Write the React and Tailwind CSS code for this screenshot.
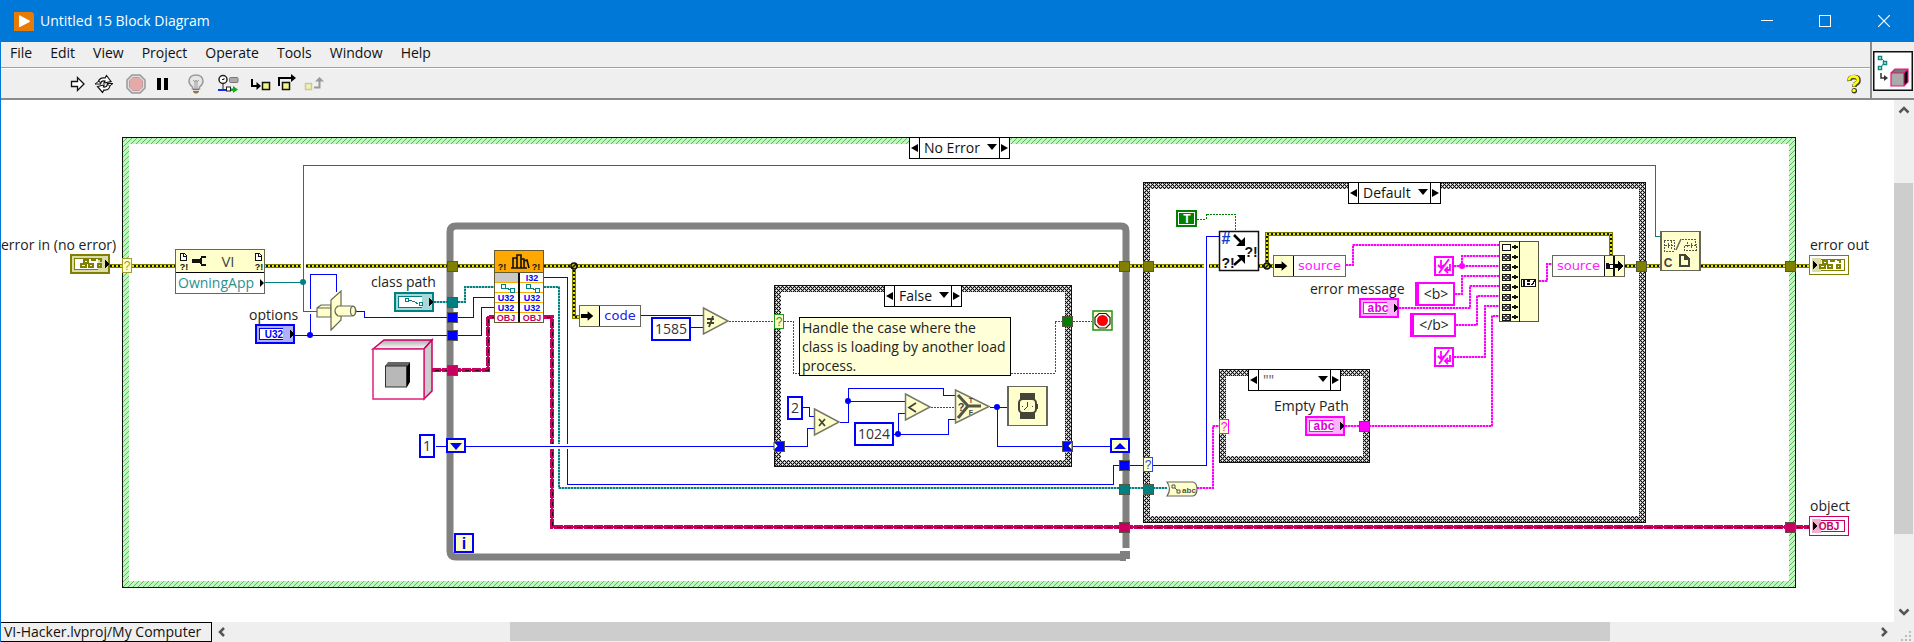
import React from "react";

const ORIGIN = { x: 1, y: 100 };
const UI = "font-['Open_Sans','Noto_Sans',sans-serif]";
const BLUE = "#0000ff";
const TEAL = "#008080";
const PINK = "#ff00ff";
const OBJ = "#c8005f";
const GREEN = "#008000";
const CREAM = "#ffffcc";

/* ---------- window chrome ---------- */

function TitleBar() {
  return (
    <header className="flex h-[42px] shrink-0 items-center bg-[#0078d7] text-white">
      <svg className="ml-[13px] size-5" viewBox="0 0 20 20" aria-hidden="true">
        <path d="M0 1H17Q20 1 20 4V20H0Z" fill="#e87a08" />
        <path d="M5 4.5Q5 4 6 4.5L15.5 9.5Q16.5 10.2 15.5 11L6 16Q5 16.400 5 15.500Z" fill="#fff" />
      </svg>
      <h1 className="ml-1.5 flex-1 text-sm leading-5">Untitled 15 Block Diagram</h1>
      <button type="button" aria-label="Minimize" className="flex h-full w-[58px] items-center justify-center">
        <svg className="h-3 w-3" viewBox="0 0 12 12" shapeRendering="crispEdges"><path d="M0 5.500H12" stroke="#fff" /></svg>
      </button>
      <button type="button" aria-label="Maximize" className="flex h-full w-[58px] items-center justify-center">
        <svg className="h-3 w-3" viewBox="0 0 12 12" shapeRendering="crispEdges"><rect x=".5" y=".5" width="11" height="11" fill="none" stroke="#fff" /></svg>
      </button>
      <button type="button" aria-label="Close" className="flex h-full w-[60px] items-center justify-center">
        <svg className="h-3 w-3" viewBox="0 0 12 12"><path d="M0 0L12 12M12 0L0 12" stroke="#fff" strokeWidth="1.200" /></svg>
      </button>
    </header>
  );
}

function MenuBar() {
  return (
    <nav className="flex h-[26px] items-center gap-[18px] border-b border-[#a0a0a0] pb-1 pl-[9px] text-sm leading-5 text-[#111]">
      {["File", "Edit", "View", "Project", "Operate", "Tools", "Window", "Help"].map((m) => (
        <button key={m} type="button">{m}</button>
      ))}
    </nav>
  );
}

function Tool({ label, className, children }) {
  return (
    <button type="button" aria-label={label} className={className}>
      <svg className="h-5 w-full" shapeRendering="geometricPrecision">{children}</svg>
    </button>
  );
}

function ToolBar() {
  return (
    <div className="flex h-8 items-center border-t border-b-2 border-t-white border-b-[#8a8a8a] pl-[69px]">
      <Tool label="Run" className="w-4">
        <path d="M1.500 7.500H7.500V3.500L14 10L7.500 16.500V12.500H1.500Z" fill="#fff" stroke="#111" strokeWidth="1.300" />
      </Tool>
      <Tool label="Run continuously" className="ml-2 w-5">
        <path d="M4 9Q5 3 11 4L12.500 1.500L17 7.500L10 9L11 7Q7 6.500 6.500 9.500Z" fill="#fff" stroke="#111" strokeWidth="1.200" />
        <path d="M16 10.500Q16 16.500 10 16L8.500 18.500L3.500 12.500L10 11L9.500 13Q13 13.500 13.500 10Z" fill="#fff" stroke="#111" strokeWidth="1.200" />
        <path d="M1 10L5 7L7 10ZM13 9.500H19L15.500 12Z" fill="#fff" stroke="#111" />
      </Tool>
      <Tool label="Abort execution" className="ml-3 w-5">
        <path d="M6 1H14L19 6V14L14 19H6L1 14V6Z" fill="#ddd" stroke="#999" strokeWidth="1.500" />
        <path d="M7 3.500H13L16.500 7V13L13 16.500H7L3.500 13V7Z" fill="#e5a9a9" stroke="#c79b9b" />
      </Tool>
      <Tool label="Pause" className="ml-2.5 w-3.5">
        <path d="M1 4H5V16H1ZM8 4H12V16H8Z" fill="#000" />
      </Tool>
      <Tool label="Highlight execution" className="ml-[18px] w-4">
        <path d="M4.500 13Q1 10.500 1 7Q1.500 1 8 1Q14.500 1 15 7Q15 10.500 11.500 13V15H4.500Z" fill="#e6e6e6" stroke="#999" strokeWidth="1.500" />
        <path d="M5 6L7 8L8 6L9 8L11 6M7 8V14M9 8V14" stroke="#999" fill="none" />
        <path d="M5 15H11V18L9 19.500H7L5 18Z" fill="#8c7a34" />
        <path d="M5 16.500H11" stroke="#ddd" />
      </Tool>
      <Tool label="Retain wire values" className="ml-[14px] w-[22px]">
        <circle cx="5" cy="5.500" r="4" fill="#fff" stroke="#222" strokeWidth="1.500" />
        <path d="M5 9V15M4 5.500H6V4" stroke="#222" fill="none" />
        <rect x="11.500" y="3.500" width="8.500" height="5" rx="1" fill="#aaa" stroke="#777" />
        <path d="M0 16H8" stroke="#1428ff" strokeWidth="2" />
        <rect x="8.500" y="13" width="4" height="4" fill="#fff" stroke="#222" />
        <path d="M13 14.500H15V12L20 15.500L15 19V17H13Z" fill="#0bb01a" />
      </Tool>
      <Tool label="Step into" className="ml-2.5 w-[22px]">
        <path d="M2 5V12H10" stroke="#000" strokeWidth="2" fill="none" /><path d="M6.500 8V16L11 12Z" />
        <rect x="12.500" y="8.500" width="7" height="7" fill="#f4f482" stroke="#111" strokeWidth="1.500" />
      </Tool>
      <Tool label="Step over" className="ml-1.5 w-5">
        <path d="M1 12V4H15" stroke="#000" strokeWidth="2" fill="none" /><path d="M13 0V8L18 4Z" />
        <rect x="4.500" y="8.500" width="7" height="7" fill="#f4f482" stroke="#111" strokeWidth="1.500" />
      </Tool>
      <Tool label="Step out" className="ml-1.5 w-5">
        <rect x="1.500" y="9.500" width="6" height="6" fill="#f1f1b4" stroke="#c8c8a0" strokeWidth="1.500" />
        <path d="M10 13.500H15.500V6" stroke="#999" strokeWidth="2" fill="none" /><path d="M11 7.500H20L15.500 3Z" fill="#999" />
      </Tool>
      <button type="button" aria-label="Context help" className="mr-2 ml-auto">
        <svg className="h-5 w-4" viewBox="0 0 16 20">
          <path d="M3.500 7Q3 3 8 3Q13 3 12.500 6.500Q12.500 9 9.500 10L8.500 11.500V13" stroke="#333" strokeWidth="4.500" fill="none" />
          <path d="M3 6.500Q3 2.500 7.500 2.500Q12 2.500 12 6Q12 8.500 8.500 10L8 11.500V12.500" stroke="#ffff00" strokeWidth="2.800" fill="none" />
          <circle cx="8.300" cy="16.800" r="2.700" fill="#333" /><circle cx="8" cy="16.500" r="1.800" fill="#ffff00" />
        </svg>
      </button>
    </div>
  );
}

function ViIcon() {
  return (
    <div className="flex w-[44px] shrink-0 items-center justify-center border-b-2 border-l-2 border-[#8a8a8a] pt-px">
      <svg className="size-10" viewBox="0 0 40 40" role="img" aria-label="VI icon">
        <rect x=".75" y=".75" width="38.500" height="38.500" fill="#fff" stroke="#111" strokeWidth="1.500" />
        <path d="M8 7L12 11L8 16" stroke="#0a8a7c" fill="none" />
        <path d="M5.500 5.500H8.500V8.500H5.500ZM10.500 10.500H13.500V13.500H10.500ZM5.500 15.500H8.500V18.500H5.500Z" fill="#fff" stroke="#0a8a7c" strokeWidth="1.500" />
        <path d="M8 22V27H13" stroke="#333" strokeWidth="1.500" fill="none" /><path d="M11 24L15 27L11 30Z" fill="#333" />
        <path d="M18 22L22 18H35L31 22Z" fill="#777" /><path d="M31 22L35 18V31L31 35Z" fill="#000" />
        <path d="M18 22H31V35H18Z" fill="#aaa" /><path d="M18 22H31V35H18ZM18 22L22 18H35V31L31 35M31 22L35 18" fill="none" stroke="#dd1a78" strokeWidth="1.200" />
      </svg>
    </div>
  );
}

/* ---------- wires ---------- */

const Halo = ({ d, w = 5 }) => <path d={d} stroke="#fff" strokeWidth={w} fill="none" />;
const Wire = ({ d, c = BLUE }) => <path d={d} stroke={c} fill="none" />;
const BoolWire = ({ d }) => <path d={d} stroke={GREEN} strokeDasharray="2 1" fill="none" />;
const ErrorWire = ({ d }) => (
  <g fill="none">
    <path d={d} stroke="#7c7c00" strokeWidth="4" />
    <path d={d} stroke="#e6e600" strokeWidth="2" />
    <path d={d} stroke="#111100" strokeWidth="2" strokeDasharray="2 2" />
  </g>
);
const StringWire = ({ d, c = PINK }) => (
  <g fill="none">
    <path d={d} stroke={c} strokeOpacity=".45" strokeWidth="2" />
    <path d={d} stroke={c} strokeWidth="2" strokeDasharray="2 1" />
  </g>
);
const ObjWire = ({ d }) => (
  <g fill="none">
    <path d={d} stroke={OBJ} strokeWidth="4" strokeDasharray="9 1" />
    <path d={d} stroke={OBJ} strokeWidth="2" />
    <path d={d} stroke="#2a0014" strokeWidth="1" strokeDasharray="4 6" strokeDashoffset="-3" />
  </g>
);
const Dot = ({ x, y, c = BLUE }) => <circle cx={x} cy={y} r="3" fill={c} shapeRendering="auto" />;

const Tunnel = ({ x, y, c }) => <rect x={x - 5} y={y - 5} width="10" height="10" fill={c} stroke="#555544" />;
const CaseInput = ({ x, y, c }) => (
  <g>
    <rect x={x} y={y} width="9" height="14" fill={CREAM} stroke={c} />
    <text x={x + 5} y={y + 12} fontSize="12" textAnchor="middle" fill={c} fontFamily="Liberation Sans, sans-serif">?</text>
  </g>
);

function Frame({ x, y, w, h, pattern }) {
  return (
    <g>
      <path fillRule="evenodd" fill={`url(#${pattern})`} d={`M${x} ${y}h${w}v${h}h${-w}zM${x + 7} ${y + 7}v${h - 14}h${w - 14}v${14 - h}z`} />
      <rect x={x + 0.5} y={y + 0.5} width={w - 1} height={h - 1} fill="none" stroke="#111" />
    </g>
  );
}

const Triangle = ({ x, y, w = 25, h = 26, children }) => (
  <g shapeRendering="auto">
    <path d={`M${x + 0.5} ${y}L${x + w} ${y + h / 2}L${x + 0.5} ${y + h}Z`} fill={CREAM} stroke="#77776a" strokeWidth="1.500" />
    {children}
  </g>
);

function Terminal({ x, y, c, light, out, children }) {
  const ax = out ? x + 4 : x + 35;
  return (
    <g>
      <rect x={x} y={y} width="40" height="20" fill={c} />
      {out ? <rect x={x + 1} y={y + 1} width="38" height="18" fill="#fff" /> : <rect x={x + 2} y={y + 2} width="36" height="16" fill={light} />}
      <rect x={x + 4.5} y={y + 4.5} width="31" height="11" fill="#fff" stroke={c} />
      <rect x={out ? x + 3 : x + 28} y={y + 3} width="9" height="14" fill={light} />
      {children}
      <path d={`M${ax} ${y + 6}v8l4 -4z`} fill="#000" />
    </g>
  );
}

const Tag = ({ x, y, size = 9, c, children }) => (
  <text x={x} y={y} fontSize={size} fontWeight="bold" fill={c} textAnchor="middle" fontFamily="Liberation Sans, sans-serif">{children}</text>
);
const Abc = ({ x, y }) => (
  <Terminal x={x} y={y} c={PINK} light="#ffb0ff">
    <text x={x + 19} y={y + 14} fontSize="12" fontWeight="bold" fill="#e000e0" textAnchor="middle" fontFamily="Liberation Mono, monospace">abc</text>
  </Terminal>
);
const Cluster = ({ x, y, c }) => (
  <path d={`M${x + 3} ${y + 6}h4v3h-4zM${x} ${y + 10}h5v3h-5zM${x + 8} ${y + 10}h4v3h-4zM${x + 10} ${y + 6}h5M${x + 17} ${y + 5}h3v3M${x + 17} ${y + 10}h3v3h-3z`} fill="none" stroke={c} strokeWidth="1.500" />
);
const PathGlyph = ({ x, y, c }) => (
  <path d={`M${x} ${y}h4v4h-4zM${x + 4} ${y + 4}h3v1h2M${x + 9} ${y + 4}h4v4h-4z`} fill="none" stroke={c} />
);
const Newline = ({ x, y }) => (
  <g>
    <rect x={x + 1} y={y + 1} width="18" height="18" fill="#fff" stroke={PINK} strokeWidth="2" />
    <path d={`M${x + 7} ${y + 4}v8M${x + 4} ${y + 9}l3 3l3 -3M${x + 15} ${y + 3}l-10 14M${x + 16} ${y + 8}v6h-5M${x + 14} ${y + 11}l-3 3l3 3`} stroke={PINK} strokeWidth="1.800" fill="none" shapeRendering="auto" />
  </g>
);
const BlackArrow = ({ x, y }) => <path d={`M${x} ${y - 2}h7v-3l6 5l-6 5v-3h-7z`} fill="#000" shapeRendering="auto" />;
const Sheet = ({ x, y }) => <path d={`M${x} ${y}h4l2 2v5h-6zM${x + 3} ${y}v3h3`} fill="#fff" stroke="#111" />;
const ErrMark = ({ x, y }) => <Tag x={x} y={y} size="9" c="#111">?!</Tag>;

function InvokeNode() {
  const rows = [[null, "I32", BLUE], ["path", "path", TEAL], ["U32", "U32", BLUE], ["U32", "U32", BLUE], ["OBJ", "OBJ", OBJ]];
  return (
    <g>
      <rect x="494" y="250" width="50" height="73" fill="#ffa800" />
      {rows.map(([a, b, c], i) => {
        const y = 273 + i * 10;
        return (
          <g key={i}>
            <rect x="495" y={y} width="23" height="9" fill={a ? "#fff" : "#c8c8c8"} />
            <rect x="520" y={y} width="23" height="9" fill="#fff" />
            {a === "path" ? <PathGlyph x={501} y={y + 1} c={c} /> : <Tag x={506} y={y + 8} c={c}>{a}</Tag>}
            {b === "path" ? <PathGlyph x={526} y={y + 1} c={c} /> : <Tag x={532} y={y + 8} c={c}>{b}</Tag>}
          </g>
        );
      })}
      <path d="M519 273V322" stroke="#111" strokeWidth="2" />
      <rect x="494.500" y="250.500" width="49" height="72" fill="none" stroke="#665a33" />
      <path d="M494 272H544" stroke="#665a33" />
      <ErrMark x={502} y={270} /><ErrMark x={536} y={270} />
      <path d="M513 268V258H517V268M517 259V255H521V268M521 259H524V268M524 261L527 260L529 268M511 268H527" fill="none" stroke="#111" strokeWidth="1.600" shapeRendering="auto" />
    </g>
  );
}

function Concatenate() {
  return (
    <g>
      <rect x="1499.500" y="241.500" width="39" height="80" fill={CREAM} stroke="#555544" />
      <path d="M1519 241V322" stroke="#111" />
      {[0, 1, 2, 3, 4, 5, 6, 7].map((i) => {
        const y = 246 + i * 10;
        return (
          <g key={i}>
            <rect x="1502" y={y - 2} width="8" height="6" fill={i ? "#444" : "#fff"} stroke="#111" />
            {i > 0 && <path d={`M1503 ${y - 1}h2M1507 ${y - 1}h2M1505 ${y + 1}h2M1503 ${y + 3}h2M1507 ${y + 3}h2`} stroke="#eee" />}
            <path d={`M1512 ${y + 1}h3M1515 ${y - 1}v4M1516 ${y}v2M1517 ${y + 1}h1`} stroke="#111" strokeWidth="1.500" />
          </g>
        );
      })}
      <rect x="1521" y="279" width="14" height="7" fill="#fff" stroke="#111" />
      <path d="M1524 279V286M1527 281H1530M1527 284H1530M1532 285L1535 280" stroke="#111" strokeWidth="1.500" />
    </g>
  );
}

function Drawing() {
  return (
    <svg className="absolute top-0 left-0 h-[522px] w-[1893px]" viewBox="1 100 1893 522" shapeRendering="crispEdges" aria-hidden="true">
      <defs>
        <pattern id="hatch" width="5" height="5" patternUnits="userSpaceOnUse">
          <rect width="5" height="5" fill="#b4ffb4" />
          <path d="M-1 6L6 -1M-1 1L1 -1M4 6L6 4" stroke="#8a9a8a" strokeWidth="1" shapeRendering="auto" />
        </pattern>
        <pattern id="weave" width="4" height="4" patternUnits="userSpaceOnUse">
          <rect width="4" height="4" fill="#a8a8a8" />
          <path d="M0 0H1V1H0ZM1 1H2V2H1ZM2 2H3V3H2ZM3 1H4V2H3ZM1 3H2V4H1ZM3 3H4V4H3Z" fill="#111" />
          <path d="M2 0H3V1H2ZM0 2H1V3H0Z" fill="#fff" />
        </pattern>
        <linearGradient id="lid" x1="0" y1="0" x2="0" y2="1"><stop offset="0" stopColor="#aaa" /><stop offset="1" stopColor="#fff" /></linearGradient>
      </defs>

      {/* structures */}
      <Frame x={122} y={137} w={1674} h={451} pattern="hatch" />
      <path d="M1126 548V231Q1126 226 1121 226H456Q450 226 450 232V551Q450 557 456 557H1122" fill="none" stroke="#808080" strokeWidth="7" shapeRendering="auto" />
      <path d="M1120 551H1130V559H1126V561H1120Z" fill="#808080" />
      <Frame x={774} y={285} w={298} h={182} pattern="weave" />
      <Frame x={1143} y={182} w={503} h={341} pattern="weave" />
      <Frame x={1219} y={369} w={151} h={94} pattern="weave" />

      {/* wires */}
      <ErrorWire d="M110 266H494" />
      <ErrorWire d="M544 266H1219M1258 266H1273M1625 266H1809" />
      <ErrorWire d="M574 266V317H580" />
      <ErrorWire d="M1267 266V234H1611V255" />
      <Wire d="M295 335H481V307H494M310 335V274H336V292M356 311H364V317H473V297H494" />
      <Halo d="M303 256V276" /><Halo d="M308 311H313" />
      <Wire c={TEAL} d="M265 282H303M303 311V165H1655V236H1661M303 311H317" />
      <StringWire c={TEAL} d="M434 302H465V287H494" />
      <ObjWire d="M432 370H488V317H494" />
      <ObjWire d="M544 317H552V527H1809" />
      <StringWire c={TEAL} d="M544 287H559V488H1167" />
      <Wire d="M544 277H567V484H1113V465H1206V236H1219" />
      <Halo d="M1206 260V272" /><Wire d="M1206 259V273" />
      <Halo d="M547 446H572" />
      <Wire d="M436 446H774M641 315H703M690 327H703" />
      <BoolWire d="M729 321H774M784 321H793V373H1055V321H1092M931 407H955M1197 219H1206V214H1235V231" />
      <Wire d="M803 407H809V416H814M784 446H807V428H814M840 422H848V388H943V395H955M848 401H906M892 434H948V419H955M898 434V413H905M990 407H1007M997 407V446H1110" />
      <StringWire d="M1346 265H1353V245H1499M1454 266H1499M1462 266V256H1499M1455 294H1462V276H1499M1399 308H1470V286H1499M1456 325H1477V296H1499M1454 357H1485V306H1499M1345 426H1492V316H1499M1539 281H1547V264H1552M1197 488H1213V426H1219" />
      <Dot x={303} y={282} c={TEAL} /><Dot x={310} y={335} /><Dot x={848} y={401} /><Dot x={898} y={434} /><Dot x={997} y={407} /><Dot x={1462} y={266} c={PINK} />
      <g fill="#c8c800" stroke="#111" strokeWidth="1.500" shapeRendering="auto">
        <circle cx="574" cy="266" r="3" /><circle cx="1267" cy="266" r="3" /><path d="M572 268L576 264M1265 268L1269 264" />
      </g>

      {/* tunnels */}
      <Tunnel x={452} y={266} c="#808000" /><Tunnel x={1124} y={266} c="#808000" /><Tunnel x={1148} y={266} c="#808000" /><Tunnel x={1641} y={266} c="#808000" /><Tunnel x={1790} y={266} c="#808000" />
      <Tunnel x={452} y={302} c={TEAL} /><Tunnel x={1124} y={489} c={TEAL} /><Tunnel x={1148} y={489} c={TEAL} />
      <Tunnel x={452} y={317} c={BLUE} /><Tunnel x={452} y={335} c={BLUE} /><Tunnel x={1124} y={465} c={BLUE} /><Tunnel x={779} y={446} c={BLUE} /><Tunnel x={1067} y={446} c={BLUE} />
      <path d="M774 442L778 446L774 450ZM1072 442L1068 446L1072 450Z" fill="#fff" stroke="#444" shapeRendering="auto" />
      <Tunnel x={452} y={370} c={OBJ} /><Tunnel x={1124} y={527} c={OBJ} /><Tunnel x={1790} y={527} c={OBJ} />
      <Tunnel x={1067} y={321} c={GREEN} /><Tunnel x={1364} y={426} c={PINK} />
      <CaseInput x={122} y={258} c="#a09a30" /><CaseInput x={774} y={314} c="#1f9a1f" /><CaseInput x={1143} y={457} c="#3344ee" /><CaseInput x={1219} y={419} c={PINK} />
      {[[447, 439, "M450 443H462L456 450Z"], [1111, 439, "M1114 449H1126L1120 443Z"]].map(([x, y, d]) => (
        <g key={x}><rect x={x} y={y} width="18" height="13" fill={CREAM} stroke={BLUE} strokeWidth="2" /><path d={d} fill={BLUE} shapeRendering="auto" /></g>
      ))}

      {/* terminals */}
      <Terminal x={70} y={254} c="#808000" light="#dcdcaa"><Cluster x={81} y={254} c="#808000" /></Terminal>
      <Terminal x={255} y={324} c={BLUE} light="#b0b0ff"><Tag x={274} y={338} size="10" c={BLUE}>U32</Tag></Terminal>
      <Terminal x={394} y={292} c={TEAL} light="#a8d8d8"><path d="M405 298h3v3h-3zM409 300l3 1l3 1l3 2M419 302h3v3h-3z" stroke={TEAL} fill="none" /></Terminal>
      <Abc x={1359} y={298} /><Abc x={1305} y={416} />
      <Terminal out x={1809} y={255} c="#808000" light="#dcdcaa"><Cluster x={1820} y={255} c="#808000" /></Terminal>
      <Terminal out x={1809} y={516} c={OBJ} light="#f0b0d0"><Tag x={1829} y={530} size="10" c={OBJ}>OBJ</Tag></Terminal>

      {/* function blocks */}
      <g fill={CREAM} stroke="#66665a" strokeWidth="1.200" shapeRendering="auto">
        <path d="M317 308L321 305H331V317H317ZM317 308H331" />
        <path d="M331 300L341 291V320L331 330Z" />
        <path d="M338 306H353Q356 308 356 311Q356 314 353 316H338Q335 314 335 311Q335 308 338 306Z" />
        <ellipse cx="353" cy="311" rx="2.500" ry="4.500" />
      </g>
      <g shapeRendering="auto">
        <path d="M373 349L384 340H432L424 349Z" fill="url(#lid)" stroke={OBJ} strokeWidth="1.500" />
        <path d="M424 349L432 340V391L424 399Z" fill="#ccc" stroke={OBJ} strokeWidth="1.500" />
        <rect x="373" y="349" width="51" height="50" fill="#fff" stroke="#e0207c" strokeWidth="1.500" />
        <path d="M385 366L388 362H410L407 366Z" fill="#666" /><path d="M407 366L410 362V382L407 387Z" fill="#000" />
        <rect x="385.500" y="366" width="21" height="21" fill="#b8b8b8" stroke="#333" />
      </g>
      <InvokeNode />
      <Triangle x={703} y={308}><path d="M707 319H714M707 323H714M713 316L709 327" stroke="#444438" strokeWidth="1.800" /></Triangle>
      <Triangle x={814} y={409}><path d="M819 419L825 426M825 419L819 426" stroke="#444438" strokeWidth="1.800" /></Triangle>
      <Triangle x={905} y={394}><path d="M916 403L909 407.500L916 412" stroke="#444438" strokeWidth="1.800" fill="none" /></Triangle>
      <Triangle x={955} y={390} w={34} h={33}>
        <path d="M958 395L968 406H981M958 418L968 406" stroke="#55554a" strokeWidth="3" fill="none" />
        <Tag x={961} y={411} size="11" c="#444">?</Tag><Tag x={971} y={403} size="7" c="#444">T</Tag><Tag x={971} y={415} size="7" c="#444">F</Tag>
      </Triangle>
      <g>
        <rect x="1008" y="386.500" width="39" height="39" fill={CREAM} stroke="#66665a" strokeWidth="1.500" />
        <path d="M1020 393H1035V400H1020ZM1020 413H1035V419H1020Z" fill="#444438" />
        <rect x="1019" y="399" width="17" height="14" rx="4" fill={CREAM} stroke="#444438" strokeWidth="2" shapeRendering="auto" />
        <path d="M1027 402V407L1024 410M1022 406H1023M1032 406H1033M1037 404V409" stroke="#444438" fill="none" />
      </g>
      <g shapeRendering="auto">
        <rect x="1093" y="311" width="19" height="19" fill={CREAM} stroke="#209020" strokeWidth="1.500" />
        <path d="M1099 313.500H1106L1110 317.500V324L1106 328H1099L1095 324V317.500Z" fill="#fff" stroke="#222" strokeWidth="1.200" />
        <circle cx="1102.500" cy="320.500" r="5.500" fill="#ff0000" />
      </g>
      <rect x="455" y="534" width="18" height="18" fill={CREAM} stroke={BLUE} strokeWidth="2" />
      <Tag x={464} y={549} size="16" c={BLUE}>i</Tag>
      <rect x="1176" y="210" width="21" height="17" fill={GREEN} /><rect x="1178.500" y="212.500" width="16" height="12" fill="none" stroke="#fff" /><Tag x={1187} y={223} size="12" c="#fff">T</Tag>
      <g shapeRendering="auto">
        <rect x="1219.500" y="231.500" width="39" height="39" fill="#fff" stroke="#111" strokeWidth="1.500" />
        <Tag x={1226} y={244} size="16" c="#1040c8">#</Tag>
        <Tag x={1251} y={257} size="14" c="#111">?!</Tag><Tag x={1228} y={268} size="14" c="#111">?!</Tag>
        <path d="M1234 235L1242 243M1234 265L1242 258" stroke="#000" strokeWidth="2.500" /><path d="M1245 246H1236L1245 237ZM1245 255H1237L1245 264Z" />
      </g>
      <Newline x={1434} y={256} /><Newline x={1434} y={347} />
      <Concatenate />
      <g>
        <rect x="1661" y="231.500" width="39" height="39" fill={CREAM} stroke="#66665a" strokeWidth="1.500" />
        <Tag x={1668} y={267} size="12" c="#444438">C</Tag>
        <path d="M1680 255H1685L1689 259V266H1680ZM1685 255V259H1689" fill="none" stroke="#444438" strokeWidth="1.500" />
        <path d="M1664 240H1674V251H1664ZM1682 239H1695V246M1684 246V250H1696V244M1668 243V248M1671 241V249M1665 245H1674M1687 242V248M1691 243V249M1685 245H1696" fill="none" stroke="#55554a" strokeDasharray="2 1" />
        <path d="M1676 250L1681 239" stroke="#66665a" strokeWidth="1.500" shapeRendering="auto" />
      </g>
      <g shapeRendering="auto">
        <path d="M1167 482H1193Q1197 483 1197 489Q1197 495 1193 496H1167Q1172 489 1167 482Z" fill={CREAM} stroke="#66665a" strokeWidth="1.200" />
        <path d="M1172 485h3v3h-3zM1175 488l2 2M1177 490h3v3h-3z" fill="none" stroke="#55554a" />
        <Tag x={1189} y={493} size="8" c="#55554a">abc</Tag>
      </g>
    </svg>
  );
}

/* ---------- text-bearing items placed on the canvas ---------- */

function Place({ x, y, className = "", children }) {
  return (
    <div className={`absolute whitespace-nowrap ${className}`} style={{ left: x - ORIGIN.x, top: y - ORIGIN.y }}>
      {children}
    </div>
  );
}

const labels = [
  ["error in (no error)", 1, 235], ["options", 249, 305], ["class path", 371, 272], ["error message", 1310, 279],
  ["Empty Path", 1274, 396], ["error out", 1810, 235], ["object", 1810, 496],
];
const constants = [["1585", 651, 317], ["2", 787, 396], ["1024", 854, 422], ["1", 419, 434]];

function Selector({ x, y, value, width, muted }) {
  return (
    <Place x={x} y={y} className={`flex h-[22px] border border-black bg-white ${width}`}>
      <button type="button" aria-label="Previous case" className="flex w-[10px] items-center border-r border-black">
        <svg className="h-2 w-2" viewBox="0 0 8 8"><path d="M8 0V8L1 4Z" /></svg>
      </button>
      <div className="relative flex min-w-0 flex-1">
        <select aria-label="Case" defaultValue={value} className={`h-5 w-full appearance-none bg-transparent pl-1 text-sm leading-5 ${muted ? "text-[#555]" : "text-[#111]"}`}>
          <option>{value}</option>
        </select>
        <svg className="pointer-events-none absolute top-1.5 right-0.5 h-1.5 w-[10px]" viewBox="0 0 10 6"><path d="M0 0H10L5 6Z" /></svg>
      </div>
      <button type="button" aria-label="Next case" className="flex w-[10px] items-center border-l border-black">
        <svg className="h-2 w-2" viewBox="0 0 8 8"><path d="M1 0V8L8 4Z" /></svg>
      </button>
    </Place>
  );
}

const BundleText = ({ className, children }) => (
  <span className={`flex flex-1 items-center justify-center font-['DejaVu_Sans',sans-serif] text-[13px] leading-4 ${className}`}>{children}</span>
);

function Unbundle({ x, y, width, children }) {
  return (
    <Place x={x} y={y} className={`flex h-[22px] border border-[#66665a] bg-white ${width}`}>
      <svg className="h-5 w-5 border-r border-black bg-[#ffffcc]" viewBox="0 0 20 20"><BlackArrow x={1} y={10} /></svg>
      {children}
    </Place>
  );
}

function Diagram() {
  return (
    <main className="relative min-w-0 flex-1 overflow-hidden bg-white">
      <Drawing />
      {labels.map(([t, x, y]) => <Place key={t} x={x} y={y} className="text-sm leading-5 text-[#222]">{t}</Place>)}
      {constants.map(([t, x, y]) => (
        <Place key={t} x={x} y={y} className="flex h-6 items-center border-2 border-[#0000ff] bg-white px-0.5 text-sm leading-5 text-[#333]">{t}</Place>
      ))}

      <Place x={175} y={249} className="w-[90px] border border-[#66665a] bg-white text-base leading-5">
        <div className="flex h-[23px] items-center justify-between border-b border-black bg-[#ffffcc] pl-1">
          <svg className="h-5 w-[84px]" viewBox="0 0 84 20" shapeRendering="crispEdges">
            <Sheet x={0} y={2} /><Sheet x={75} y={2} /><ErrMark x={4} y={19} /><ErrMark x={79} y={19} />
            <path d="M12 8H21V12H12Z" fill="#111" /><path d="M26 6H22L21 8V12L22 14H26" fill="none" stroke="#111" strokeWidth="2" />
            <text x="48" y="16" fontSize="15" textAnchor="middle" fill="#444">VI</text>
          </svg>
        </div>
        <div className="flex h-5 items-center pl-0.5 text-sm text-[#2a9090]">
          <span className="flex-1">OwningApp</span>
          <svg className="h-2 w-1" viewBox="0 0 4 8"><path d="M0 0V8L4 4Z" /></svg>
        </div>
      </Place>

      <Unbundle x={579} y={305} width="w-[62px]"><BundleText className="text-[#2222ee]">code</BundleText></Unbundle>
      <Unbundle x={1273} y={255} width="w-[73px]"><BundleText className="text-[#ff22ff]">source</BundleText></Unbundle>
      <Place x={1552} y={255} className="flex h-[22px] w-[73px] border border-[#66665a] bg-white">
        <BundleText className="text-[#ff22ff]">source</BundleText>
        <svg className="h-5 w-5 bg-[#ffffcc]" viewBox="0 0 20 20" shapeRendering="crispEdges">
          <path d="M0 0V20M10 0V20" stroke="#111" strokeWidth="2" />
          <path d="M2 7H5V13H2Z" fill="#111" /><path d="M5 8H9V12H5Z" fill="#fff" stroke="#111" />
          <path d="M9 8H14V5L19 10L14 15V12H9Z" />
        </svg>
      </Place>

      <Place x={1415} y={282} className="flex h-6 w-10 items-center justify-center border-2 border-l-4 border-[#ff00ff] bg-white text-sm text-[#222]">&lt;b&gt;</Place>
      <Place x={1410} y={313} className="flex h-6 w-[46px] items-center justify-center border-2 border-l-4 border-[#ff00ff] bg-white text-sm text-[#222]">&lt;/b&gt;</Place>

      <Place x={799} y={317} className="border border-black bg-[#ffffd8] pr-1 pl-0.5 text-sm leading-[19px] text-[#222]">
        <p>Handle the case where the<br />class is loading by another load<br />process.</p>
      </Place>

      <Selector x={909} y={137} value="No Error" width="w-[101px]" />
      <Selector x={884} y={285} value="False" width="w-[78px]" />
      <Selector x={1348} y={182} value="Default" width="w-[93px]" />
      <Selector x={1248} y={369} value={'""'} width="w-[93px]" muted />
    </main>
  );
}

/* ---------- scroll bars ---------- */

const Chevron = ({ d }) => (
  <svg className="size-3" viewBox="0 0 12 12"><path d={d} fill="none" stroke="#555" strokeWidth="2.500" /></svg>
);

function VerticalBar() {
  return (
    <div className="flex w-5 shrink-0 flex-col bg-[#efefef] pr-px">
      <button type="button" aria-label="Scroll up" className="flex h-5 items-center justify-center"><Chevron d="M1.500 8.500L6 4L10.500 8.500" /></button>
      <div className="flex-[63]" /><div className="flex-[351] bg-[#cdcdcd]" /><div className="flex-[68]" />
      <button type="button" aria-label="Scroll down" className="flex h-5 items-center justify-center"><Chevron d="M1.500 3.500L6 8L10.500 3.500" /></button>
    </div>
  );
}

function BottomBar() {
  return (
    <footer className="flex h-5 shrink-0 bg-[#efefef]">
      <div className="flex min-w-[211px] items-center border border-l-0 border-black px-[3px] text-sm leading-4 whitespace-nowrap text-[#111]">VI-Hacker.lvproj/My Computer</div>
      <button type="button" aria-label="Scroll left" className="flex w-5 items-center justify-center"><Chevron d="M8 2L4 6L8 10" /></button>
      <div className="flex flex-1 pb-px"><div className="flex-[278]" /><div className="flex-[1100] bg-[#cdcdcd]" /><div className="flex-[264]" /></div>
      <button type="button" aria-label="Scroll right" className="flex w-5 items-center justify-center"><Chevron d="M4 2L8 6L4 10" /></button>
      <svg className="size-5" viewBox="0 0 20 20" shapeRendering="crispEdges">
        <path d="M15 9h2v2h-2zM11 13h2v2h-2zM15 13h2v2h-2zM7 17h2v2h-2zM11 17h2v2h-2zM15 17h2v2h-2z" fill="#bbb" />
      </svg>
    </footer>
  );
}

export default function App() {
  return (
    <div className={`flex h-screen flex-col overflow-hidden border-l border-[#0078d7] bg-[#efefef] ${UI}`}>
      <TitleBar />
      <div className="flex h-[58px] shrink-0">
        <div className="min-w-0 flex-1"><MenuBar /><ToolBar /></div>
        <ViIcon />
      </div>
      <div className="flex min-h-0 flex-1"><Diagram /><VerticalBar /></div>
      <BottomBar />
    </div>
  );
}
